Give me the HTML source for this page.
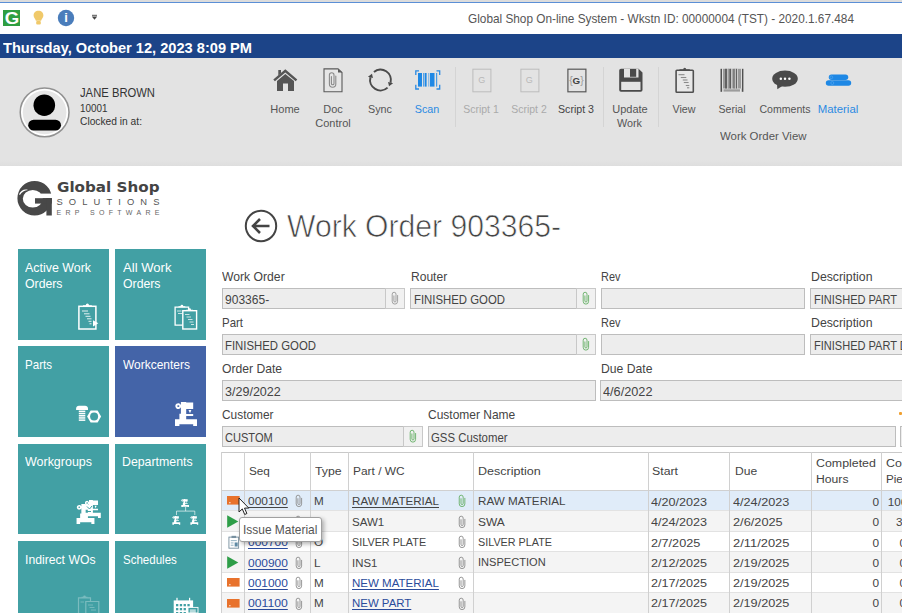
<!DOCTYPE html>
<html><head><meta charset="utf-8"><title>Global Shop On-line System</title>
<style>
*{box-sizing:border-box;margin:0;padding:0}
html,body{width:902px;height:613px;overflow:hidden;background:#fff}
body{position:relative;font-family:"Liberation Sans",sans-serif;color:#444;font-size:13px}
.a{position:absolute}
.t{position:absolute;white-space:nowrap;line-height:1;color:#444}
.tile{position:absolute;width:90.7px;height:91px;background:#42a0a4}
.inp{position:absolute;height:21px;border:1px solid #bdbdbd;background:#ededed}
.clipb{position:absolute;height:21px;width:20px;border:1px solid #c8c8c8;background:#f1f1f1}
.sep{position:absolute;width:1px;background:#d4d4d4;top:67px;height:60px}
.vl{position:absolute;width:1px;background:#d0d0d0;top:452px;height:161px}
.hl{position:absolute;height:1px;background:#e2e2e2;left:222px;width:680px}
.row{position:absolute;left:222px;width:680px}
u{text-decoration:underline;text-underline-offset:1.5px}
</style></head><body>
<div class="a" style="left:0;top:0;width:902px;height:2px;background:#dcdcdc"></div>
<div class="a" style="left:0;top:2px;width:902px;height:1px;background:#5b8fd6"></div>
<div class="a" style="left:0;top:34px;width:902px;height:24px;background:#1c4488"></div>
<div class="a" style="left:0;top:58px;width:902px;height:108px;background:#e3e3e3"></div>
<div class="a" style="left:0;top:160px;width:902px;height:6px;background:linear-gradient(#e3e3e3,#dedede)"></div>
<!-- title bar icons -->
<svg class="a" style="left:3px;top:10px" width="17" height="16" viewBox="0 0 17 16"><rect width="17" height="16" fill="#2f9e41"/></svg>
<svg class="a" style="left:33px;top:10px" width="11" height="16" viewBox="0 0 11 16"><path d="M5.5 .8C2.600 .8 .6 2.900 .6 5.400C.6 7.600 2.500 8.800 2.900 10.800H8.100C8.500 8.800 10.400 7.600 10.400 5.400C10.400 2.900 8.400 .8 5.500 .8Z" fill="#f0c96a"/><rect x="3.200" y="11" width="4.600" height="3.600" rx="1" fill="#f0c96a"/></svg>
<svg class="a" style="left:57px;top:9px" width="18" height="18" viewBox="0 0 18 18"><circle cx="9" cy="9" r="8.200" fill="#4a7dbb"/></svg>
<svg class="a" style="left:91px;top:14px" width="7" height="7" viewBox="0 0 7 7"><rect x="1" y=".8" width="5" height="1" fill="#555"/><path d="M.8 2.600H6.200L3.500 5.800Z" fill="#444"/></svg>
<!-- avatar -->
<svg class="a" style="left:18px;top:85.500px" width="54" height="54" viewBox="0 0 54 54"><circle cx="26.600" cy="26.350" r="24.400" fill="#fff" stroke="#929292" stroke-width="1.500"/><circle cx="26.600" cy="26.350" r="21.800" fill="#e6e6e6"/><circle cx="26.300" cy="19.200" r="10.800" fill="#000"/><rect x="10.200" y="33.700" width="32.800" height="10.900" rx="5.450" fill="#000"/></svg>
<!-- Home -->
<svg class="a" style="left:272px;top:68px" width="27" height="24" viewBox="0 0 27 24"><path d="M13.300 1.300L1.300 11.600L2.900 13.200L13.300 4.400L23.700 13.200L25.300 11.600Z" fill="#555"/><path d="M6.300 2H9V5.200L6.300 7.500Z" fill="#555"/><path d="M13.300 6L5 13V23H11V15.500H16V23H22V13Z" fill="#555"/></svg>
<!-- Doc control -->
<svg class="a" style="left:323px;top:68px" width="20" height="25" viewBox="0 0 20 25"><path d="M1 .9H15L19 4.600V23.700H1Z" fill="#e6e6e6" stroke="#5a5a5a" stroke-width="1.100"/><path d="M15 .9V4.600H19Z" fill="#5a5a5a"/><path d="M12.800 8V16A3.200 3.200 0 0 1 6.400 16V7A2.300 2.300 0 0 1 11 7V15.500A1.300 1.300 0 0 1 8.400 15.500V8.500" fill="none" stroke="#8a8a8a" stroke-width="1.100" stroke-linecap="round"/></svg>
<!-- Sync -->
<svg class="a" style="left:367px;top:66.500px" width="27" height="27" viewBox="0 0 27 27"><path d="M6.960 4.920A10.400 10.400 0 0 1 23.550 15.690" fill="none" stroke="#4a4a4a" stroke-width="2"/><path d="M20.590 20.610A10.400 10.400 0 0 1 3.450 10.310" fill="none" stroke="#4a4a4a" stroke-width="2"/><path d="M21.030 15.020L26.060 16.360L22.020 19.300Z" fill="#4a4a4a"/><path d="M5.970 10.980L.940 9.640L4.980 6.700Z" fill="#4a4a4a"/></svg>
<!-- Scan -->
<svg class="a" style="left:414px;top:69px" width="28" height="22" viewBox="0 0 28 22"><g fill="none" stroke="#2b8ae2" stroke-width="1.300"><path d="M5 1.800H1.800V6"/><path d="M22.500 1.800H25.700V6"/><path d="M5 20H1.800V15.800"/><path d="M22.500 20H25.700V15.800"/></g><g fill="#1e88e5"><rect x="4" y="4" width="4" height="13.600"/><rect x="9" y="4" width="1" height="13.600" opacity=".7"/><rect x="10.600" y="4" width="2" height="13.600"/><rect x="14.400" y="4" width=".8" height="13.600" opacity=".7"/><rect x="16" y="4" width="4.500" height="13.600"/><rect x="22" y="4" width="1.200" height="13.600" opacity=".8"/></g></svg>
<div class="sep" style="left:455px"></div>
<!-- Script 1,2,3 -->
<svg class="a" style="left:472px;top:68px" width="20" height="25" viewBox="0 0 20 25"><rect x=".9" y="1.200" width="18" height="22.600" fill="none" stroke="#bcbcbc" stroke-width="1"/></svg>
<svg class="a" style="left:519.500px;top:68px" width="20" height="25" viewBox="0 0 20 25"><rect x=".9" y="1.200" width="18" height="22.600" fill="none" stroke="#bcbcbc" stroke-width="1"/></svg>
<svg class="a" style="left:567px;top:68px" width="20" height="25" viewBox="0 0 20 25"><rect x=".9" y="1.200" width="18" height="22.600" fill="none" stroke="#585858" stroke-width="1.200"/></svg>
<div class="sep" style="left:603px"></div>
<!-- Save -->
<svg class="a" style="left:619px;top:68px" width="24" height="24" viewBox="0 0 24 24"><path d="M2 .8H19.500L23.500 4.600V22A1.800 1.800 0 0 1 21.700 23.800H2A1.800 1.800 0 0 1 .2 22V2.600A1.800 1.800 0 0 1 2 .8Z" fill="#4a4a4a"/><rect x="5" y=".8" width="14.500" height="8.700" fill="#e4e4e4"/><rect x="11" y="1" width="6.200" height="7.800" fill="#4a4a4a"/><rect x="2.200" y="13.800" width="19.300" height="8.200" fill="#e4e4e4"/></svg>
<div class="sep" style="left:657.500px"></div>
<!-- View clipboard -->
<svg class="a" style="left:674px;top:66px" width="22" height="28" viewBox="0 0 22 28"><rect x="2.100" y="4.300" width="17.200" height="22" rx=".8" fill="#e8e8e8" stroke="#505050" stroke-width="1.600"/><path d="M5.500 5V3.200H9.200A1.500 1.500 0 0 1 12.200 3.200H15.800V5Z" fill="#505050"/><g stroke="#8a8a8a" stroke-width="1.100"><path d="M4.500 8.700H10.500"/><path d="M6.800 11.500H12.300"/><path d="M8.800 14H13.500"/><path d="M9.800 16.500H14.600"/><path d="M11.800 19.500H15.300"/><path d="M13 21.800H15.300"/></g></svg>
<!-- Serial barcode -->
<svg class="a" style="left:720px;top:68px" width="24" height="25" viewBox="0 0 24 25"><rect x=".5" y=".8" width="1.600" height="23" fill="#505050"/><rect x="21.800" y=".8" width="1.600" height="23" fill="#505050"/><rect x="3" y=".8" width="18" height="19.700" fill="#9a9a9a"/><g fill="#555"><rect x="5.200" y=".8" width="1.600" height="19.700"/><rect x="8.400" y=".8" width="1" height="19.700"/><rect x="10" y=".8" width=".9" height="19.700"/><rect x="13.600" y=".8" width="1" height="19.700"/><rect x="15.800" y=".8" width="1" height="19.700"/></g><g fill="#e3e3e3"><rect x="2.100" y=".8" width=".9" height="19.700"/><rect x="7.500" y=".8" width=".9" height="19.700"/><rect x="11.400" y=".8" width=".8" height="19.700"/><rect x="14.800" y=".8" width=".8" height="19.700"/><rect x="17.200" y=".8" width=".7" height="19.700"/><rect x="21" y=".8" width=".8" height="19.700"/></g><rect x="3.500" y="21.300" width="16.500" height="2.300" fill="#9c9c9c"/></svg>
<!-- Comments -->
<svg class="a" style="left:771px;top:69px" width="28" height="22" viewBox="0 0 28 22"><ellipse cx="14" cy="9.700" rx="12.800" ry="8.100" fill="#4a4a4a"/><path d="M6 14L6.300 20.200L12 16.500Z" fill="#4a4a4a"/><circle cx="9.800" cy="9.800" r="1.250" fill="#fff"/><circle cx="14" cy="9.800" r="1.250" fill="#fff"/><circle cx="18.400" cy="9.800" r="1.250" fill="#fff"/></svg>
<!-- Material -->
<svg class="a" style="left:824px;top:73px" width="28" height="14" viewBox="0 0 28 14"><rect x="4.800" y="1.600" width="19.400" height="5.300" rx="2.650" fill="#1e88e5"/><rect x="1.800" y="7.300" width="25.400" height="5.500" rx="2.750" fill="#1e88e5"/><circle cx="8.300" cy="10" r="1.500" fill="none" stroke="#5aa9f0" stroke-width=".6"/><circle cx="7.300" cy="4.300" r="1.400" fill="none" stroke="#5aa9f0" stroke-width=".6"/></svg>
<!-- logo G mark -->
<svg class="a" style="left:16px;top:180px" width="38" height="36" viewBox="0 0 38 36"><path fill-rule="evenodd" d="M1.400 18.250A17.200 17.200 0 1 0 35.800 18.250A17.200 17.200 0 1 0 1.400 18.250ZM6.800 18.800A10 8.800 0 1 1 26.800 18.800A10 8.800 0 1 1 6.800 18.800Z" fill="#484848"/><rect x="25" y="13.600" width="13" height="4.600" fill="#fff"/><rect x="19" y="18.200" width="16.800" height="5.400" fill="#484848"/><rect x="30.400" y="18.200" width="5.400" height="17.300" fill="#484848"/><path d="M3 14.300C4.800 10.300 8.200 8.900 12 9.900C8.400 10.400 5.800 11.900 3.900 14.900Z" fill="#fff"/></svg>
<!-- back arrow -->
<svg class="a" style="left:244px;top:209px" width="34" height="34" viewBox="0 0 34 34"><circle cx="17" cy="17" r="15.200" fill="none" stroke="#444" stroke-width="2"/><path d="M25.500 17H9.500M16 10L9 17L16 24" fill="none" stroke="#444" stroke-width="2.600"/></svg>
<!-- tiles -->
<div class="tile" style="left:18px;top:249px;height:90.500px"></div>
<div class="tile" style="left:115.300px;top:249px;height:90.500px"></div>
<div class="tile" style="left:18px;top:346px;height:90.500px"></div>
<div class="tile" style="left:115.300px;top:346px;height:90.500px;background:#4464a8"></div>
<div class="tile" style="left:18px;top:443.500px;height:90.300px"></div>
<div class="tile" style="left:115.300px;top:443.500px;height:90.300px"></div>
<div class="tile" style="left:18px;top:541px;height:72px"></div>
<div class="tile" style="left:115.300px;top:541px;height:72px"></div>
<!-- tile icons -->
<svg class="a" style="left:77px;top:303px" width="23" height="28" viewBox="0 0 23 28"><rect x="1.900" y="3.300" width="17" height="22.700" fill="none" stroke="#fff" stroke-width="1.500"/><path d="M6 3.300V2.200H8.800A1.600 1.600 0 0 1 12 2.200H14.800V3.300Z" fill="#fff"/><g stroke="#fff" stroke-width="1" opacity=".85"><path d="M5 8H11"/><path d="M7 10.800H12.500"/><path d="M8.500 13.300H13.500"/><path d="M10 15.800H14.500"/><path d="M11.500 18.300H14.500"/><path d="M12.500 20.800H14.500"/></g><path d="M16 17.200L21.300 20.300L16 23.500Z" fill="#fff"/></svg>
<svg class="a" style="left:173px;top:304px" width="26" height="27" viewBox="0 0 26 27"><path d="M9.500 21.200H2.100V3.200H15.600V6" fill="none" stroke="#fff" stroke-width="1.300"/><path d="M5.500 3.200V2.200H7.500A1.400 1.400 0 0 1 10.300 2.200H12.300V3.200Z" fill="#fff"/><rect x="9.800" y="6.700" width="13.800" height="18.300" fill="none" stroke="#fff" stroke-width="1.400"/><path d="M13.200 6.700V5.700H15.200A1.400 1.400 0 0 1 18 5.700H20V6.700Z" fill="#fff"/><g stroke="#fff" stroke-width=".9" opacity=".8"><path d="M4 7H8.500"/><path d="M5 9.500H9"/><path d="M12 10.500H16.500"/><path d="M13.500 13H18"/><path d="M15 15.500H19.500"/><path d="M16.500 18H20.500"/><path d="M18 20.500H21"/></g></svg>
<!-- parts: bolt + nut -->
<svg class="a" style="left:75px;top:405px" width="28" height="20" viewBox="0 0 28 20"><path d="M1.100 5V3.500A3 3 0 0 1 4 .8H10A3 3 0 0 1 13 3.500V5Z" fill="#fff"/><g fill="#fff"><rect x="3.800" y="5.600" width="6.500" height="1.500"/><rect x="3.800" y="7.800" width="6.500" height="1.500"/><rect x="3.800" y="10" width="6.500" height="1.500"/><rect x="3.800" y="12.200" width="6.500" height="1.500"/><rect x="3.800" y="14.400" width="6.500" height="1.500"/></g><path d="M15.600 5.400H22.600L26.100 11.500L22.600 17.600H15.600L12.100 11.500Z" fill="#fff"/><circle cx="19.100" cy="11.500" r="4" fill="#42a0a4"/></svg>
<!-- workcenter machine -->
<svg class="a" style="left:174.800px;top:401.900px;color:#fff" width="22" height="24.600" viewBox="0 0 22 24.600"><path fill-rule="evenodd" d="M5.900 0H11.200V.6H18.200V7H11.200V12H18.200V14.100H11.200V17.300H22V24.600H18.200V22.300H4.400V24.600H0V17.300H4.400V11.700H5.900V5.160A2.900 2.900 0 1 1 5.900 3.040ZM2.200 4.100A1.100 .9 0 1 0 4.400 4.100A1.100 .9 0 1 0 2.200 4.100ZM13.500 7.900H16.400L15 11.200Z" fill="currentColor"/></svg>
<!-- workgroups -->
<svg class="a" style="left:84px;top:499.500px;color:#fff" width="17.500" height="18" viewBox="0 0 22 24.600"><path fill-rule="evenodd" d="M5.900 0H11.200V.6H18.200V7H11.200V12H18.200V14.100H11.200V17.300H22V24.600H18.200V22.300H4.400V24.600H0V17.300H4.400V11.700H5.900V5.160A2.900 2.900 0 1 1 5.900 3.040ZM2.200 4.100A1.100 .9 0 1 0 4.400 4.100A1.100 .9 0 1 0 2.200 4.100ZM13.500 7.900H16.400L15 11.200Z" fill="currentColor"/></svg>
<svg class="a" style="left:75.800px;top:503.500px;color:#fff" width="19" height="20" viewBox="0 0 22 24.600"><path fill-rule="evenodd" d="M5.900 0H11.200V.6H18.200V7H11.200V12H18.200V14.100H11.200V17.300H22V24.600H18.200V22.300H4.400V24.600H0V17.300H4.400V11.700H5.900V5.160A2.900 2.900 0 1 1 5.900 3.040ZM2.200 4.100A1.100 .9 0 1 0 4.400 4.100A1.100 .9 0 1 0 2.200 4.100ZM13.500 7.900H16.400L15 11.200Z" fill="currentColor"/></svg>
<svg class="a" style="left:84px;top:506px" width="14" height="10" viewBox="0 0 14 10"><path d="M3 .5L5.500 3L8 0" fill="none" stroke="#42a0a4" stroke-width="1"/><path d="M2 5.500H7" stroke="#42a0a4" stroke-width="1"/></svg>
<!-- departments -->
<svg class="a" style="left:181.400px;top:498.600px;color:#fff" width="8.300" height="8.600" viewBox="0 0 22 24.600"><path fill-rule="evenodd" d="M5.900 0H11.200V.6H18.200V7H11.200V12H18.200V14.100H11.200V17.300H22V24.600H18.200V22.300H4.400V24.600H0V17.300H4.400V11.700H5.900V5.160A2.900 2.900 0 1 1 5.900 3.040ZM2.200 4.100A1.100 .9 0 1 0 4.400 4.100A1.100 .9 0 1 0 2.200 4.100ZM13.500 7.900H16.400L15 11.200Z" fill="currentColor"/></svg>
<svg class="a" style="left:172.400px;top:515.800px;color:#fff" width="8.600" height="8.800" viewBox="0 0 22 24.600"><path fill-rule="evenodd" d="M5.900 0H11.200V.6H18.200V7H11.200V12H18.200V14.100H11.200V17.300H22V24.600H18.200V22.300H4.400V24.600H0V17.300H4.400V11.700H5.900V5.160A2.900 2.900 0 1 1 5.900 3.040ZM2.200 4.100A1.100 .9 0 1 0 4.400 4.100A1.100 .9 0 1 0 2.200 4.100ZM13.500 7.900H16.400L15 11.200Z" fill="currentColor"/></svg>
<svg class="a" style="left:190.400px;top:515.800px;color:#fff" width="8.600" height="8.800" viewBox="0 0 22 24.600"><path fill-rule="evenodd" d="M5.900 0H11.200V.6H18.200V7H11.200V12H18.200V14.100H11.200V17.300H22V24.600H18.200V22.300H4.400V24.600H0V17.300H4.400V11.700H5.900V5.160A2.900 2.900 0 1 1 5.900 3.040ZM2.200 4.100A1.100 .9 0 1 0 4.400 4.100A1.100 .9 0 1 0 2.200 4.100ZM13.500 7.900H16.400L15 11.200Z" fill="currentColor"/></svg>
<svg class="a" style="left:175px;top:507px" width="22" height="9" viewBox="0 0 22 9"><path d="M10.600 0V4.100M1.500 8V4.100H19.800V8" fill="none" stroke="#fff" stroke-width=".8" opacity=".8"/></svg>
<!-- indirect WOs (faint) -->
<svg class="a" style="left:77px;top:595px;opacity:.3" width="24" height="18" viewBox="0 0 24 18"><path d="M1.500 18V2.800H13.500V6" fill="none" stroke="#fff" stroke-width="1.200"/><path d="M4.500 2.800V1.800H6.200A1.300 1.300 0 0 1 8.800 1.800H10.500V2.800Z" fill="#fff"/><path d="M8.800 18V6.500H21.800V18" fill="none" stroke="#fff" stroke-width="1.200"/><g stroke="#fff" stroke-width=".9"><path d="M3.500 7H7"/><path d="M11 10H16"/><path d="M12.500 12.500H17.500"/><path d="M14 15H19"/></g></svg>
<!-- schedules calendar -->
<svg class="a" style="left:173px;top:597px" width="26" height="16" viewBox="0 0 26 16"><rect x="3.400" y=".8" width="1.200" height="3.500" fill="#fff"/><rect x="16" y=".8" width="1.200" height="3.500" fill="#fff"/><rect x=".7" y="3.400" width="19.400" height="12.600" fill="#fff"/><g fill="#42a0a4"><rect x="3" y="7" width="2.300" height="2.300"/><rect x="6.800" y="7" width="2.300" height="2.300"/><rect x="10.600" y="7" width="2.300" height="2.300"/><rect x="14.400" y="7" width="2.300" height="2.300"/><rect x="3" y="11" width="2.300" height="2.300"/><rect x="6.800" y="11" width="2.300" height="2.300"/><rect x="10.600" y="11" width="2.300" height="2.300"/><rect x="3" y="15" width="2.300" height="1"/><rect x="6.800" y="15" width="2.300" height="1"/><rect x="10.600" y="15" width="2.300" height="1"/></g><rect x="15" y="10.400" width="10" height="5.600" fill="#42a0a4" stroke="#fff" stroke-width=".9"/><rect x="16.800" y="12.300" width="6" height="3.700" fill="#fff" opacity=".6"/></svg>
<!-- form -->
<div class="inp" style="left:221.5px;top:288px;width:183.5px"></div>
<div class="clipb" style="left:385.3px;top:288px;width:19.7px"></div>
<svg class="a" style="left:391.1px;top:291.2px;color:#9a9a9a" width="8" height="14.6" viewBox="0 0 8 14" preserveAspectRatio="none"><path d="M6.600 4.300V9.900A2.700 2.700 0 0 1 1.200 9.900V3.100A1.900 1.900 0 0 1 5 3.100V9.500A1.050 1.050 0 0 1 2.900 9.500V4.700" fill="none" stroke="currentColor" stroke-width=".9" stroke-linecap="round"/></svg>
<div class="inp" style="left:410.3px;top:288px;width:185.7px"></div>
<div class="clipb" style="left:576.3px;top:288px;width:19.7px"></div>
<svg class="a" style="left:582.1px;top:291.2px;color:#68b068" width="8" height="14.6" viewBox="0 0 8 14" preserveAspectRatio="none"><path d="M6.600 4.300V9.900A2.700 2.700 0 0 1 1.200 9.900V3.100A1.900 1.900 0 0 1 5 3.100V9.500A1.050 1.050 0 0 1 2.900 9.500V4.700" fill="none" stroke="currentColor" stroke-width=".9" stroke-linecap="round"/></svg>
<div class="inp" style="left:601px;top:288px;width:204.0px"></div>
<div class="inp" style="left:810.3px;top:288px;width:99.7px"></div>
<div class="inp" style="left:221.5px;top:334px;width:374.5px"></div>
<div class="clipb" style="left:576.3px;top:334px;width:19.7px"></div>
<svg class="a" style="left:582.1px;top:337.2px;color:#68b068" width="8" height="14.6" viewBox="0 0 8 14" preserveAspectRatio="none"><path d="M6.600 4.300V9.900A2.700 2.700 0 0 1 1.200 9.900V3.100A1.900 1.900 0 0 1 5 3.100V9.500A1.050 1.050 0 0 1 2.900 9.500V4.700" fill="none" stroke="currentColor" stroke-width=".9" stroke-linecap="round"/></svg>
<div class="inp" style="left:601px;top:334px;width:204.0px"></div>
<div class="inp" style="left:810.3px;top:334px;width:99.7px"></div>
<div class="inp" style="left:221.5px;top:380px;width:374.0px"></div>
<div class="inp" style="left:599.8px;top:380px;width:310.2px"></div>
<div class="inp" style="left:221.5px;top:426px;width:201.5px"></div>
<div class="clipb" style="left:403.3px;top:426px;width:19.7px"></div>
<svg class="a" style="left:409.1px;top:429.2px;color:#68b068" width="8" height="14.6" viewBox="0 0 8 14" preserveAspectRatio="none"><path d="M6.600 4.300V9.900A2.700 2.700 0 0 1 1.200 9.900V3.100A1.900 1.900 0 0 1 5 3.100V9.500A1.050 1.050 0 0 1 2.900 9.500V4.700" fill="none" stroke="currentColor" stroke-width=".9" stroke-linecap="round"/></svg>
<div class="inp" style="left:427.7px;top:426px;width:468.8px"></div>
<div class="inp" style="left:900.3px;top:426px;width:9.7px"></div>
<div class="a" style="left:899px;top:412px;width:3px;height:3px;background:#f0a030;border-radius:1px"></div>
<!-- table -->
<div class="row" style="top:490.5px;height:20.4px;background:#e0ecf9"></div>
<div class="row" style="top:510.9px;height:20.4px;background:#f4f4f4"></div>
<div class="row" style="top:531.4px;height:20.5px;background:#ffffff"></div>
<div class="row" style="top:551.9px;height:20.4px;background:#f4f4f4"></div>
<div class="row" style="top:572.3px;height:20.5px;background:#ffffff"></div>
<div class="row" style="top:592.8px;height:20.5px;background:#f4f4f4"></div>
<div class="a" style="left:221.5px;top:452px;width:681px;height:1px;background:#c9c9c9"></div>
<div class="a" style="left:221.5px;top:490px;width:681px;height:1px;background:#d0d0d0"></div>
<div class="hl" style="top:510.4px"></div>
<div class="hl" style="top:530.9px"></div>
<div class="hl" style="top:551.4px"></div>
<div class="hl" style="top:571.8px"></div>
<div class="hl" style="top:592.2px"></div>
<div class="vl" style="left:221.0px"></div>
<div class="vl" style="left:243.5px"></div>
<div class="vl" style="left:309.5px"></div>
<div class="vl" style="left:348.0px"></div>
<div class="vl" style="left:473.0px"></div>
<div class="vl" style="left:647.8px"></div>
<div class="vl" style="left:729.1px"></div>
<div class="vl" style="left:810.8px"></div>
<div class="vl" style="left:880.8px"></div>
<svg class="a" style="left:227px;top:496.3px" width="13" height="9" viewBox="0 0 13 9"><rect width="12.600" height="8.600" fill="#e8722c"/><rect x="2.200" y="6" width="1.300" height="1.300" fill="#fff" opacity=".8"/></svg>
<svg class="a" style="left:227px;top:515.0px" width="12" height="13" viewBox="0 0 12 13"><path d="M.2 .3L11.300 6.500L.2 12.700Z" fill="#2e9e48"/></svg>
<svg class="a" style="left:227.5px;top:535.0px" width="12" height="14" viewBox="0 0 13 15"><rect x="1" y="2.200" width="10.500" height="12" fill="#fff" stroke="#7890a0" stroke-width="1"/><rect x="3.800" y=".8" width="5" height="2.400" fill="#7890a0"/><g stroke="#7fa3b6" stroke-width=".9"><path d="M3 6H9.500"/><path d="M3 8.500H6"/><path d="M3 11H6"/></g><rect x="7.200" y="8" width="3.300" height="4.400" fill="#5f8aa4"/></svg>
<svg class="a" style="left:227px;top:555.9px" width="12" height="13" viewBox="0 0 12 13"><path d="M.2 .3L11.300 6.500L.2 12.700Z" fill="#2e9e48"/></svg>
<svg class="a" style="left:227px;top:578.1px" width="13" height="9" viewBox="0 0 13 9"><rect width="12.600" height="8.600" fill="#e8722c"/><rect x="2.200" y="6" width="1.300" height="1.300" fill="#fff" opacity=".8"/></svg>
<svg class="a" style="left:227px;top:598.5px" width="13" height="9" viewBox="0 0 13 9"><rect width="12.600" height="8.600" fill="#e8722c"/><rect x="2.200" y="6" width="1.300" height="1.300" fill="#fff" opacity=".8"/></svg>
<svg class="a" style="left:295.3px;top:494.2px;color:#8c8c8c" width="8" height="14" viewBox="0 0 8 14" preserveAspectRatio="none"><path d="M6.600 4.300V9.900A2.700 2.700 0 0 1 1.200 9.900V3.100A1.900 1.900 0 0 1 5 3.100V9.500A1.050 1.050 0 0 1 2.900 9.500V4.700" fill="none" stroke="currentColor" stroke-width=".9" stroke-linecap="round"/></svg>
<svg class="a" style="left:458.2px;top:494.2px;color:#68b068" width="8.3" height="14" viewBox="0 0 8 14" preserveAspectRatio="none"><path d="M6.600 4.300V9.900A2.700 2.700 0 0 1 1.200 9.900V3.100A1.900 1.900 0 0 1 5 3.100V9.500A1.050 1.050 0 0 1 2.900 9.500V4.700" fill="none" stroke="currentColor" stroke-width=".9" stroke-linecap="round"/></svg>
<svg class="a" style="left:295.3px;top:514.6px;color:#8c8c8c" width="8" height="14" viewBox="0 0 8 14" preserveAspectRatio="none"><path d="M6.600 4.300V9.900A2.700 2.700 0 0 1 1.200 9.900V3.100A1.900 1.900 0 0 1 5 3.100V9.500A1.050 1.050 0 0 1 2.900 9.500V4.700" fill="none" stroke="currentColor" stroke-width=".9" stroke-linecap="round"/></svg>
<svg class="a" style="left:458.2px;top:514.6px;color:#8c8c8c" width="8.3" height="14" viewBox="0 0 8 14" preserveAspectRatio="none"><path d="M6.600 4.300V9.900A2.700 2.700 0 0 1 1.200 9.900V3.100A1.900 1.900 0 0 1 5 3.100V9.500A1.050 1.050 0 0 1 2.900 9.500V4.700" fill="none" stroke="currentColor" stroke-width=".9" stroke-linecap="round"/></svg>
<svg class="a" style="left:295.3px;top:535.1px;color:#8c8c8c" width="8" height="14" viewBox="0 0 8 14" preserveAspectRatio="none"><path d="M6.600 4.300V9.900A2.700 2.700 0 0 1 1.200 9.900V3.100A1.900 1.900 0 0 1 5 3.100V9.500A1.050 1.050 0 0 1 2.900 9.500V4.700" fill="none" stroke="currentColor" stroke-width=".9" stroke-linecap="round"/></svg>
<svg class="a" style="left:458.2px;top:535.1px;color:#8c8c8c" width="8.3" height="14" viewBox="0 0 8 14" preserveAspectRatio="none"><path d="M6.600 4.300V9.900A2.700 2.700 0 0 1 1.200 9.900V3.100A1.900 1.900 0 0 1 5 3.100V9.500A1.050 1.050 0 0 1 2.900 9.500V4.700" fill="none" stroke="currentColor" stroke-width=".9" stroke-linecap="round"/></svg>
<svg class="a" style="left:295.3px;top:555.6px;color:#8c8c8c" width="8" height="14" viewBox="0 0 8 14" preserveAspectRatio="none"><path d="M6.600 4.300V9.900A2.700 2.700 0 0 1 1.200 9.900V3.100A1.900 1.900 0 0 1 5 3.100V9.500A1.050 1.050 0 0 1 2.900 9.500V4.700" fill="none" stroke="currentColor" stroke-width=".9" stroke-linecap="round"/></svg>
<svg class="a" style="left:458.2px;top:555.6px;color:#8c8c8c" width="8.3" height="14" viewBox="0 0 8 14" preserveAspectRatio="none"><path d="M6.600 4.300V9.900A2.700 2.700 0 0 1 1.200 9.900V3.100A1.900 1.900 0 0 1 5 3.100V9.500A1.050 1.050 0 0 1 2.900 9.500V4.700" fill="none" stroke="currentColor" stroke-width=".9" stroke-linecap="round"/></svg>
<svg class="a" style="left:295.3px;top:576.0px;color:#8c8c8c" width="8" height="14" viewBox="0 0 8 14" preserveAspectRatio="none"><path d="M6.600 4.300V9.900A2.700 2.700 0 0 1 1.200 9.900V3.100A1.900 1.900 0 0 1 5 3.100V9.500A1.050 1.050 0 0 1 2.900 9.500V4.700" fill="none" stroke="currentColor" stroke-width=".9" stroke-linecap="round"/></svg>
<svg class="a" style="left:458.2px;top:576.0px;color:#8c8c8c" width="8.3" height="14" viewBox="0 0 8 14" preserveAspectRatio="none"><path d="M6.600 4.300V9.900A2.700 2.700 0 0 1 1.200 9.900V3.100A1.900 1.900 0 0 1 5 3.100V9.500A1.050 1.050 0 0 1 2.900 9.500V4.700" fill="none" stroke="currentColor" stroke-width=".9" stroke-linecap="round"/></svg>
<svg class="a" style="left:295.3px;top:596.5px;color:#8c8c8c" width="8" height="14" viewBox="0 0 8 14" preserveAspectRatio="none"><path d="M6.600 4.300V9.900A2.700 2.700 0 0 1 1.200 9.900V3.100A1.900 1.900 0 0 1 5 3.100V9.500A1.050 1.050 0 0 1 2.900 9.500V4.700" fill="none" stroke="currentColor" stroke-width=".9" stroke-linecap="round"/></svg>
<svg class="a" style="left:458.2px;top:596.5px;color:#8c8c8c" width="8.3" height="14" viewBox="0 0 8 14" preserveAspectRatio="none"><path d="M6.600 4.300V9.900A2.700 2.700 0 0 1 1.200 9.900V3.100A1.900 1.900 0 0 1 5 3.100V9.500A1.050 1.050 0 0 1 2.900 9.500V4.700" fill="none" stroke="currentColor" stroke-width=".9" stroke-linecap="round"/></svg>

<div class="t" style="left:468.0px;top:12.7px;font-size:12.8px;color:#555;transform:scaleX(0.9229);transform-origin:0 0;">Global Shop On-line System - Wkstn ID: 00000004 (TST) - 2020.1.67.484</div>
<div class="t" style="left:2.5px;top:40.7px;font-size:14.5px;color:#fff;font-weight:bold;transform:scaleX(1.0075);transform-origin:0 0;">Thursday, October 12, 2023 8:09 PM</div>
<div class="t" style="left:80.0px;top:85.7px;font-size:13px;color:#333;transform:scaleX(0.8653);transform-origin:0 0;">JANE BROWN</div>
<div class="t" style="left:80.0px;top:103.5px;font-size:10.3px;color:#333;transform:scaleX(0.9602);transform-origin:0 0;">10001</div>
<div class="t" style="left:80.0px;top:116.6px;font-size:10.3px;color:#333;transform:scaleX(0.9937);transform-origin:0 0;">Clocked in at:</div>
<div class="t" style="left:11.5px;top:9.8px;font-size:17px;color:#fff;font-weight:bold;transform:translateX(-50%) scaleX(1.0956);transform-origin:50% 0;">G</div>
<div class="t" style="left:66.1px;top:11.3px;font-size:13px;color:#fff;font-weight:bold;transform:translateX(-50%);transform-origin:50% 0;">i</div>
<div class="t" style="left:285.0px;top:103.9px;font-size:10.8px;color:#555;transform:translateX(-50%) scaleX(1.0239);transform-origin:50% 0;">Home</div>
<div class="t" style="left:332.5px;top:103.9px;font-size:10.8px;color:#555;transform:translateX(-50%) scaleX(1.0155);transform-origin:50% 0;">Doc</div>
<div class="t" style="left:332.8px;top:117.6px;font-size:10.8px;color:#555;transform:translateX(-50%) scaleX(1.0197);transform-origin:50% 0;">Control</div>
<div class="t" style="left:380.0px;top:103.9px;font-size:10.8px;color:#555;transform:translateX(-50%) scaleX(0.9993);transform-origin:50% 0;">Sync</div>
<div class="t" style="left:427.4px;top:103.9px;font-size:10.8px;color:#2b8ae2;transform:translateX(-50%) scaleX(0.9956);transform-origin:50% 0;">Scan</div>
<div class="t" style="left:481.2px;top:103.9px;font-size:10.8px;color:#aaa;transform:translateX(-50%) scaleX(0.9697);transform-origin:50% 0;">Script 1</div>
<div class="t" style="left:528.7px;top:103.9px;font-size:10.8px;color:#aaa;transform:translateX(-50%) scaleX(0.9697);transform-origin:50% 0;">Script 2</div>
<div class="t" style="left:576.0px;top:103.9px;font-size:10.8px;transform:translateX(-50%) scaleX(0.9834);transform-origin:50% 0;">Script 3</div>
<div class="t" style="left:629.5px;top:103.9px;font-size:10.8px;color:#555;transform:translateX(-50%) scaleX(1.0193);transform-origin:50% 0;">Update</div>
<div class="t" style="left:629.5px;top:117.6px;font-size:10.8px;color:#555;transform:translateX(-50%) scaleX(1.0000);transform-origin:50% 0;">Work</div>
<div class="t" style="left:684.0px;top:103.9px;font-size:10.8px;color:#555;transform:translateX(-50%) scaleX(0.9906);transform-origin:50% 0;">View</div>
<div class="t" style="left:731.8px;top:103.9px;font-size:10.8px;color:#555;transform:translateX(-50%) scaleX(0.9779);transform-origin:50% 0;">Serial</div>
<div class="t" style="left:785.0px;top:103.9px;font-size:10.8px;color:#555;transform:translateX(-50%) scaleX(0.9770);transform-origin:50% 0;">Comments</div>
<div class="t" style="left:838.0px;top:103.9px;font-size:10.8px;color:#2b8ae2;transform:translateX(-50%) scaleX(1.0545);transform-origin:50% 0;">Material</div>
<div class="t" style="left:719.5px;top:130.6px;font-size:11.8px;color:#555;transform:scaleX(0.9677);transform-origin:0 0;">Work Order View</div>
<div class="t" style="left:481.7px;top:76.2px;font-size:9px;color:#b8b8b8;transform:translateX(-50%);transform-origin:50% 0;">G</div>
<div class="t" style="left:529.2px;top:76.2px;font-size:9px;color:#b8b8b8;transform:translateX(-50%);transform-origin:50% 0;">G</div>
<div class="t" style="left:576.3px;top:75.5px;font-size:9.8px;font-weight:bold;transform:translateX(-50%);transform-origin:50% 0;">G</div>
<div class="t" style="left:569.3px;top:74.7px;font-size:10.5px;color:#999;">{</div>
<div class="t" style="left:580.3px;top:74.7px;font-size:10.5px;color:#999;">}</div>
<div class="t" style="left:56.5px;top:180.8px;font-size:13.2px;font-weight:bold;transform:scaleX(1.1485);transform-origin:0 0;font-family:'DejaVu Sans','Liberation Sans',sans-serif;">Global Shop</div>
<div class="t" style="left:56.5px;top:197.3px;font-size:9.4px;color:#555;letter-spacing:6.102px;">SOLUTIONS</div>
<div class="t" style="left:56.5px;top:209.2px;font-size:7px;color:#666;letter-spacing:4.307px;">ERP SOFTWARE</div>
<div class="t" style="left:286.5px;top:211.2px;font-size:31.4px;transform:scaleX(0.9595);transform-origin:0 0;-webkit-text-stroke:.7px #fff;">Work Order 903365-</div>
<div class="t" style="left:25.4px;top:262.0px;font-size:12.7px;color:#fff;transform:scaleX(0.9785);transform-origin:0 0;">Active Work</div>
<div class="t" style="left:25.4px;top:277.5px;font-size:12.7px;color:#fff;transform:scaleX(0.9670);transform-origin:0 0;">Orders</div>
<div class="t" style="left:122.7px;top:262.0px;font-size:12.7px;color:#fff;transform:scaleX(1.0319);transform-origin:0 0;">All Work</div>
<div class="t" style="left:122.7px;top:277.5px;font-size:12.7px;color:#fff;transform:scaleX(0.9670);transform-origin:0 0;">Orders</div>
<div class="t" style="left:25.4px;top:358.5px;font-size:12.7px;color:#fff;transform:scaleX(0.9114);transform-origin:0 0;">Parts</div>
<div class="t" style="left:122.7px;top:358.5px;font-size:12.7px;color:#fff;transform:scaleX(0.9439);transform-origin:0 0;">Workcenters</div>
<div class="t" style="left:25.4px;top:456.0px;font-size:12.7px;color:#fff;transform:scaleX(0.9828);transform-origin:0 0;">Workgroups</div>
<div class="t" style="left:122.4px;top:456.0px;font-size:12.7px;color:#fff;transform:scaleX(0.9719);transform-origin:0 0;">Departments</div>
<div class="t" style="left:25.4px;top:553.5px;font-size:12.7px;color:#fff;transform:scaleX(0.9614);transform-origin:0 0;">Indirect WOs</div>
<div class="t" style="left:122.5px;top:553.5px;font-size:12.7px;color:#fff;transform:scaleX(0.9080);transform-origin:0 0;">Schedules</div>
<div class="t" style="left:221.7px;top:271.3px;font-size:12.7px;transform:scaleX(0.9598);transform-origin:0 0;">Work Order</div>
<div class="t" style="left:410.8px;top:271.3px;font-size:12.7px;transform:scaleX(0.9503);transform-origin:0 0;">Router</div>
<div class="t" style="left:601.0px;top:271.3px;font-size:12.7px;transform:scaleX(0.8598);transform-origin:0 0;">Rev</div>
<div class="t" style="left:811.0px;top:271.3px;font-size:12.7px;transform:scaleX(0.9690);transform-origin:0 0;">Description</div>
<div class="t" style="left:221.7px;top:317.3px;font-size:12.7px;transform:scaleX(0.9020);transform-origin:0 0;">Part</div>
<div class="t" style="left:601.0px;top:317.3px;font-size:12.7px;transform:scaleX(0.8598);transform-origin:0 0;">Rev</div>
<div class="t" style="left:811.0px;top:317.3px;font-size:12.7px;transform:scaleX(0.9690);transform-origin:0 0;">Description</div>
<div class="t" style="left:221.7px;top:363.3px;font-size:12.7px;transform:scaleX(0.9575);transform-origin:0 0;">Order Date</div>
<div class="t" style="left:600.7px;top:363.3px;font-size:12.7px;transform:scaleX(0.9588);transform-origin:0 0;">Due Date</div>
<div class="t" style="left:221.7px;top:409.3px;font-size:12.7px;transform:scaleX(0.9364);transform-origin:0 0;">Customer</div>
<div class="t" style="left:428.0px;top:409.3px;font-size:12.7px;transform:scaleX(0.9440);transform-origin:0 0;">Customer Name</div>
<div class="t" style="left:224.6px;top:293.9px;font-size:12.7px;transform:scaleX(0.9493);transform-origin:0 0;">903365-</div>
<div class="t" style="left:413.6px;top:293.9px;font-size:12.7px;transform:scaleX(0.8964);transform-origin:0 0;">FINISHED GOOD</div>
<div class="t" style="left:813.6px;top:293.9px;font-size:12.7px;transform:scaleX(0.8700);transform-origin:0 0;">FINISHED PART</div>
<div class="t" style="left:224.6px;top:339.9px;font-size:12.7px;transform:scaleX(0.8964);transform-origin:0 0;">FINISHED GOOD</div>
<div class="t" style="left:813.6px;top:339.9px;font-size:12.7px;transform:scaleX(0.8697);transform-origin:0 0;">FINISHED PART DESC</div>
<div class="t" style="left:224.6px;top:385.9px;font-size:12.7px;transform:scaleX(0.9884);transform-origin:0 0;">3/29/2022</div>
<div class="t" style="left:603.2px;top:385.9px;font-size:12.7px;transform:scaleX(1.0022);transform-origin:0 0;">4/6/2022</div>
<div class="t" style="left:224.6px;top:431.9px;font-size:12.7px;transform:scaleX(0.8712);transform-origin:0 0;">CUSTOM</div>
<div class="t" style="left:431.0px;top:431.9px;font-size:12.7px;transform:scaleX(0.8967);transform-origin:0 0;">GSS Customer</div>
<div class="t" style="left:248.6px;top:465.3px;font-size:11.7px;transform:scaleX(1.0050);transform-origin:0 0;">Seq</div>
<div class="t" style="left:315.0px;top:465.3px;font-size:11.7px;transform:scaleX(1.0535);transform-origin:0 0;">Type</div>
<div class="t" style="left:353.3px;top:465.3px;font-size:11.7px;transform:scaleX(1.0206);transform-origin:0 0;">Part / WC</div>
<div class="t" style="left:478.4px;top:465.3px;font-size:11.7px;transform:scaleX(1.0724);transform-origin:0 0;">Description</div>
<div class="t" style="left:652.3px;top:465.3px;font-size:11.7px;transform:scaleX(1.0532);transform-origin:0 0;">Start</div>
<div class="t" style="left:734.6px;top:465.3px;font-size:11.7px;transform:scaleX(1.0348);transform-origin:0 0;">Due</div>
<div class="t" style="left:816.1px;top:457.1px;font-size:11.7px;transform:scaleX(1.0596);transform-origin:0 0;">Completed</div>
<div class="t" style="left:816.1px;top:472.8px;font-size:11.7px;transform:scaleX(1.0421);transform-origin:0 0;">Hours</div>
<div class="t" style="left:885.9px;top:457.1px;font-size:11.7px;transform:scaleX(1.0596);transform-origin:0 0;">Completed</div>
<div class="t" style="left:885.9px;top:472.8px;font-size:11.7px;transform:scaleX(0.9973);transform-origin:0 0;">Pieces</div>
<div class="t" style="left:247.5px;top:495.0px;font-size:11.7px;transform:scaleX(1.0201);transform-origin:0 0;"><u>000100</u></div>
<div class="t" style="left:314.0px;top:495.0px;font-size:11.7px;">M</div>
<div class="t" style="left:352.3px;top:495.0px;font-size:11.7px;transform:scaleX(0.9923);transform-origin:0 0;"><u>RAW MATERIAL</u></div>
<div class="t" style="left:478.1px;top:494.8px;font-size:11.7px;transform:scaleX(0.9992);transform-origin:0 0;">RAW MATERIAL</div>
<div class="t" style="left:651.3px;top:495.6px;font-size:11.7px;transform:scaleX(1.0788);transform-origin:0 0;">4/20/2023</div>
<div class="t" style="left:732.9px;top:495.6px;font-size:11.7px;transform:scaleX(1.0846);transform-origin:0 0;">4/24/2023</div>
<div class="t" style="left:878.5px;top:495.6px;font-size:11.7px;transform:translateX(-100%) scaleX(1.0129);transform-origin:100% 0;">0</div>
<div class="t" style="left:887.7px;top:495.6px;font-size:11.7px;">106</div>
<div class="t" style="left:247.5px;top:515.7px;font-size:11.7px;color:#2a4b9b;transform:scaleX(1.0201);transform-origin:0 0;"><u>000300</u></div>
<div class="t" style="left:314.0px;top:515.7px;font-size:11.7px;">L</div>
<div class="t" style="left:352.3px;top:515.7px;font-size:11.7px;transform:scaleX(0.9877);transform-origin:0 0;">SAW1</div>
<div class="t" style="left:478.1px;top:515.5px;font-size:11.7px;transform:scaleX(1.0228);transform-origin:0 0;">SWA</div>
<div class="t" style="left:651.3px;top:516.3px;font-size:11.7px;transform:scaleX(1.0788);transform-origin:0 0;">4/24/2023</div>
<div class="t" style="left:732.9px;top:516.3px;font-size:11.7px;transform:scaleX(1.0923);transform-origin:0 0;">2/6/2025</div>
<div class="t" style="left:878.5px;top:516.3px;font-size:11.7px;transform:translateX(-100%) scaleX(1.0129);transform-origin:100% 0;">0</div>
<div class="t" style="left:896.0px;top:516.3px;font-size:11.7px;">3</div>
<div class="t" style="left:247.5px;top:536.3px;font-size:11.7px;color:#2a4b9b;transform:scaleX(1.0201);transform-origin:0 0;"><u>000700</u></div>
<div class="t" style="left:314.0px;top:536.3px;font-size:11.7px;">O</div>
<div class="t" style="left:352.3px;top:536.3px;font-size:11.7px;transform:scaleX(0.9248);transform-origin:0 0;">SILVER PLATE</div>
<div class="t" style="left:478.1px;top:536.1px;font-size:11.7px;transform:scaleX(0.9236);transform-origin:0 0;">SILVER PLATE</div>
<div class="t" style="left:651.3px;top:536.9px;font-size:11.7px;transform:scaleX(1.0835);transform-origin:0 0;">2/7/2025</div>
<div class="t" style="left:732.9px;top:536.9px;font-size:11.7px;transform:scaleX(1.1028);transform-origin:0 0;">2/11/2025</div>
<div class="t" style="left:878.5px;top:536.9px;font-size:11.7px;transform:translateX(-100%) scaleX(1.0129);transform-origin:100% 0;">0</div>
<div class="t" style="left:899.5px;top:536.9px;font-size:11.7px;">0</div>
<div class="t" style="left:247.5px;top:556.6px;font-size:11.7px;color:#2a4b9b;transform:scaleX(1.0201);transform-origin:0 0;"><u>000900</u></div>
<div class="t" style="left:314.0px;top:556.6px;font-size:11.7px;">L</div>
<div class="t" style="left:352.3px;top:556.6px;font-size:11.7px;transform:scaleX(0.9737);transform-origin:0 0;">INS1</div>
<div class="t" style="left:478.1px;top:556.4px;font-size:11.7px;transform:scaleX(0.9477);transform-origin:0 0;">INSPECTION</div>
<div class="t" style="left:651.3px;top:557.2px;font-size:11.7px;transform:scaleX(1.0788);transform-origin:0 0;">2/12/2025</div>
<div class="t" style="left:732.9px;top:557.2px;font-size:11.7px;transform:scaleX(1.0846);transform-origin:0 0;">2/19/2025</div>
<div class="t" style="left:878.5px;top:557.2px;font-size:11.7px;transform:translateX(-100%) scaleX(1.0129);transform-origin:100% 0;">0</div>
<div class="t" style="left:899.5px;top:557.2px;font-size:11.7px;">0</div>
<div class="t" style="left:247.5px;top:576.8px;font-size:11.7px;color:#2a4b9b;transform:scaleX(1.0201);transform-origin:0 0;"><u>001000</u></div>
<div class="t" style="left:314.0px;top:576.8px;font-size:11.7px;">M</div>
<div class="t" style="left:352.3px;top:576.8px;font-size:11.7px;color:#2a4b9b;transform:scaleX(0.9863);transform-origin:0 0;"><u>NEW MATERIAL</u></div>
<div class="t" style="left:651.3px;top:577.4px;font-size:11.7px;transform:scaleX(1.0788);transform-origin:0 0;">2/17/2025</div>
<div class="t" style="left:732.9px;top:577.4px;font-size:11.7px;transform:scaleX(1.0846);transform-origin:0 0;">2/19/2025</div>
<div class="t" style="left:878.5px;top:577.4px;font-size:11.7px;transform:translateX(-100%) scaleX(1.0129);transform-origin:100% 0;">0</div>
<div class="t" style="left:899.5px;top:577.4px;font-size:11.7px;">0</div>
<div class="t" style="left:247.5px;top:597.3px;font-size:11.7px;color:#2a4b9b;transform:scaleX(1.0435);transform-origin:0 0;"><u>001100</u></div>
<div class="t" style="left:314.0px;top:597.3px;font-size:11.7px;">M</div>
<div class="t" style="left:352.3px;top:597.3px;font-size:11.7px;color:#2a4b9b;transform:scaleX(0.9784);transform-origin:0 0;"><u>NEW PART</u></div>
<div class="t" style="left:651.3px;top:597.4px;font-size:11.7px;transform:scaleX(1.0788);transform-origin:0 0;">2/17/2025</div>
<div class="t" style="left:732.9px;top:597.4px;font-size:11.7px;transform:scaleX(1.0846);transform-origin:0 0;">2/19/2025</div>
<div class="t" style="left:878.5px;top:597.4px;font-size:11.7px;transform:translateX(-100%) scaleX(1.0129);transform-origin:100% 0;">0</div>
<div class="t" style="left:899.5px;top:597.4px;font-size:11.7px;">0</div>
<!-- tooltip -->
<div class="a" style="left:238.600px;top:516.600px;width:83.200px;height:25.600px;background:#fff;border:1px solid #a0a0a0;border-radius:3px;box-shadow:2px 2px 4px rgba(0,0,0,.3)"></div>
<div class="t" style="left:242.800px;top:524.300px;font-size:12.200px;color:#555;transform:scaleX(.98);transform-origin:0 0">Issue Material</div>
<!-- cursor -->
<svg class="a" style="left:238px;top:497px" width="12" height="19" viewBox="0 0 12 19"><path d="M1 1V15L4.300 11.900L6.700 17.500L8.900 16.500L6.500 11.100H10.800Z" fill="#fff" stroke="#222" stroke-width="1"/></svg>

</body></html>
